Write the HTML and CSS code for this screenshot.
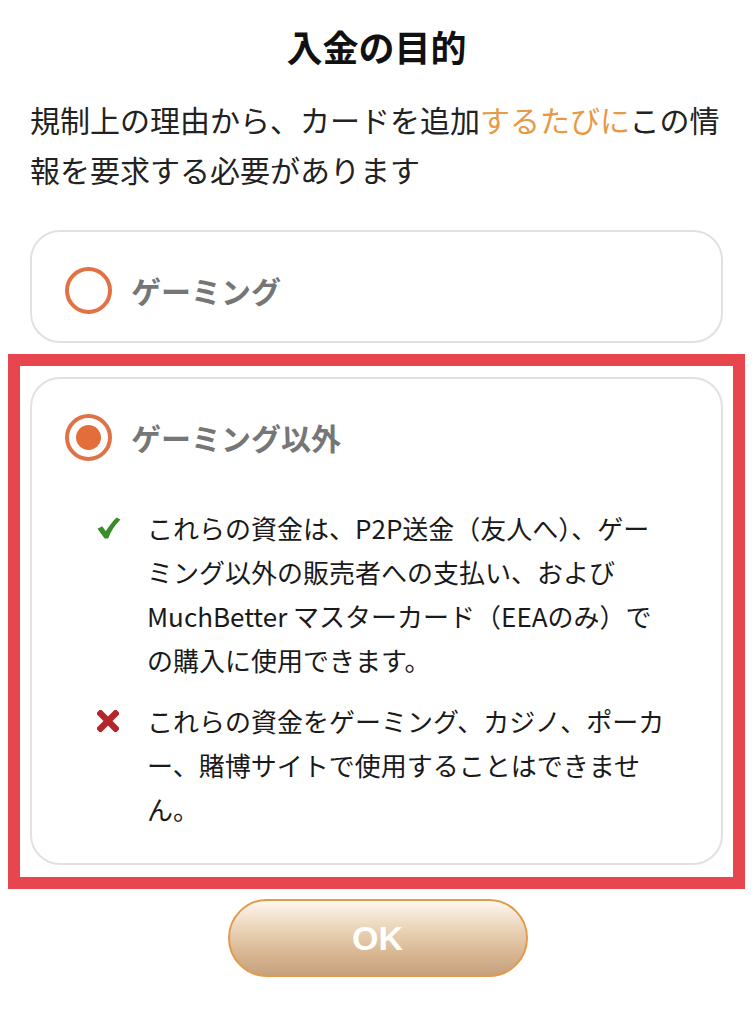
FILE: index.html
```html
<!DOCTYPE html>
<html lang="ja">
<head>
<meta charset="utf-8">
<title>入金の目的</title>
<link rel="stylesheet" href="styles.css">
</head>
<body>
<div class="page">
  <h1 class="title">入金の目的</h1>
  <p class="intro">規制上の理由から、カードを追加<span class="accent">するたびに</span>この情報を要求する必要があります</p>

  <div class="option">
    <div class="option-head">
      <span class="radio"></span>
      <span class="option-label">ゲーミング</span>
    </div>
  </div>

  <div class="highlight">
    <div class="option">
      <div class="option-head">
        <span class="radio radio-on"><span class="radio-dot"></span></span>
        <span class="option-label">ゲーミング以外</span>
      </div>
      <ul class="rules">
        <li class="rule">
          <span class="rule-icon">
            <svg width="24" height="24" viewBox="0 0 24 24"><path d="M0.5 12.8 L5.2 10.2 L8.8 15.2 C12 10 15.5 5.5 19.6 1.5 L23.5 3.6 C18 9 14 15 11.2 22.6 L7.6 22.6 Z" fill="#3a8b2a"/></svg>
          </span>
          <span class="rule-text">これらの資金は、P2P送金（友人へ）、ゲーミング以外の販売者への支払い、およびMuchBetter マスターカード（EEAのみ）での購入に使用できます。</span>
        </li>
        <li class="rule">
          <span class="rule-icon">
            <svg width="22" height="22" viewBox="0 0 22 22"><path d="M3.5 3.5 L18.5 18.5 M18.5 3.5 L3.5 18.5" stroke="#b5262a" stroke-width="6.5" stroke-linecap="square"/></svg>
          </span>
          <span class="rule-text">これらの資金をゲーミング、カジノ、ポーカー、賭博サイトで使用することはできません。</span>
        </li>
      </ul>
    </div>
  </div>

  <div class="actions">
    <button class="ok-button" type="button">OK</button>
  </div>
</div>
</body>
</html>
```

FILE: styles.css
```css
* {
  box-sizing: border-box;
}

html, body {
  margin: 0;
  padding: 0;
  background: #ffffff;
}

body {
  font-family: "Noto Sans CJK JP", "Noto Sans", sans-serif;
  color: #1c1c1c;
}

.page {
  width: 755px;
  padding: 0 10px 40px 8px;
}

.title {
  margin: 0;
  padding-top: 20px;
  font-size: 36px;
  line-height: 52px;
  font-weight: 700;
  text-align: center;
  color: #111111;
}

.intro {
  margin: 22px 22px 0 22px;
  font-size: 30px;
  line-height: 50px;
  color: #222222;
}

.accent {
  color: #e69a45;
}

.option {
  margin: 36px 22px 0 22px;
  border: 2px solid #e1e1e1;
  border-radius: 30px;
  padding: 35px 20px 28px 33px;
  background: #ffffff;
}

.option-head {
  display: flex;
  align-items: center;
  gap: 19px;
  height: 46px;
}

.radio {
  width: 47px;
  height: 47px;
  flex: none;
  border: 4px solid #e07245;
  border-radius: 50%;
  display: flex;
  align-items: center;
  justify-content: center;
}

.radio-dot {
  width: 25px;
  height: 25px;
  border-radius: 50%;
  background: #e36e3b;
}

.option-label {
  font-size: 30px;
  font-weight: 700;
  color: #767676;
  line-height: 46px;
}

.highlight {
  margin-top: 11px;
  border: 12px solid #e8464f;
  padding: 11px 10px 12px 10px;
}

.highlight .option {
  margin: 0;
  padding-bottom: 32px;
}

.rules {
  list-style: none;
  margin: 46px 0 0 0;
  padding: 0 0 0 32px;
  display: flex;
  flex-direction: column;
  gap: 17px;
}

.rule {
  display: grid;
  grid-template-columns: 50px 525px;
  align-items: start;
}

.rule-icon {
  height: 44px;
  display: flex;
  align-items: center;
}

.rule-text {
  font-size: 26px;
  line-height: 44px;
  color: #1a1a1a;
}

.actions {
  display: flex;
  justify-content: center;
  margin-top: 10px;
  padding-left: 2px;
}

.ok-button {
  width: 300px;
  height: 78px;
  border: 2px solid #e29a4c;
  border-radius: 39px;
  background: linear-gradient(to bottom, #fdf7f0 0%, #ecd6bb 35%, #d9b792 70%, #c6a27e 100%);
  color: #ffffff;
  font-family: "Liberation Sans", "Noto Sans", sans-serif;
  font-size: 34px;
  font-weight: 700;
  padding: 0;
  cursor: pointer;
}
```
